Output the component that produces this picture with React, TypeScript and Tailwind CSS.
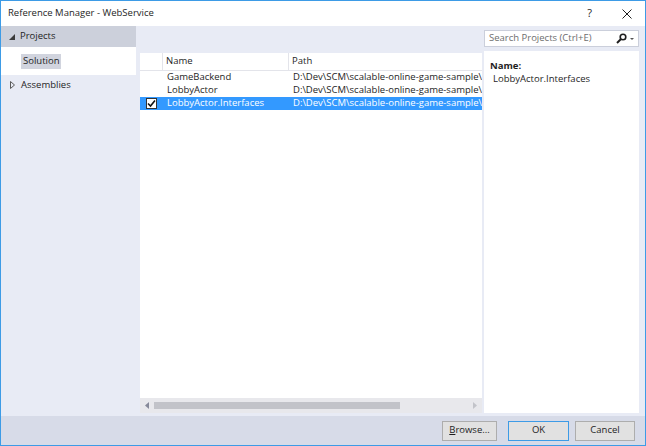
const projects = [
  { name: 'GameBackend', path: 'D:\\Dev\\SCM\\scalable-online-game-sample\\', checked: false },
  { name: 'LobbyActor', path: 'D:\\Dev\\SCM\\scalable-online-game-sample\\', checked: false },
  { name: 'LobbyActor.Interfaces', path: 'D:\\Dev\\SCM\\scalable-online-game-sample\\', checked: true },
];

function CheckBox() {
  return (
    <div className="flex h-[11px] w-[11px] items-center justify-center border border-[#333] bg-white">
      <svg width="9" height="9" viewBox="0 0 9 9">
        <path d="M1 4.5 L3.5 7 L8 1.5" fill="none" stroke="#111" strokeWidth="1.6" />
      </svg>
    </div>
  );
}

export default function App() {
  return (
    <div className="flex h-[446px] w-[646px] flex-col border border-[#3d9be6] bg-[#e8ebf5] font-['Open_Sans',sans-serif] text-[9.5px] text-[#1e1e1e]">
      {/* title bar */}
      <div className="flex h-[25px] shrink-0 items-center bg-white pl-[7px]">
        <span className="text-[9.5px]">Reference Manager - WebService</span>
        <span className="ml-auto mr-[30px] text-[11px]">?</span>
        <svg width="10" height="10" viewBox="0 0 10 10" className="mr-[13px]">
          <path d="M0.5 0.5 L9.5 9.5 M9.5 0.5 L0.5 9.5" stroke="#1e1e1e" strokeWidth="1" />
        </svg>
      </div>

      <div className="flex min-h-0 flex-1 pb-[3px]">
        {/* left tree */}
        <div className="flex w-[135px] shrink-0 flex-col">
          <div className="flex h-[21px] items-center bg-[#ccd0db] pl-[8px]">
            <svg width="6" height="6" viewBox="0 0 6 6" className="mr-[5px]">
              <path d="M6 0 L6 6 L0 6 Z" fill="#3b3b3b" />
            </svg>
            <span>Projects</span>
          </div>
          <div className="flex h-[28px] items-center bg-white pl-[20px]">
            <span className="flex h-[15px] items-center bg-[#d1d4de] px-[2px]">Solution</span>
          </div>
          <div className="flex h-[20px] items-center pl-[9px]">
            <svg width="5" height="8" viewBox="0 0 5 8" className="mr-[6px]">
              <path d="M0.5 0.5 L4.5 4 L0.5 7.5 Z" fill="none" stroke="#5a5a5a" strokeWidth="1" />
            </svg>
            <span>Assemblies</span>
          </div>
        </div>

        {/* project list */}
        <div className="ml-[4px] flex w-[342px] shrink-0 flex-col pt-[27px]">
          <div className="flex min-h-0 flex-1 flex-col bg-white">
            <div className="flex h-[18px] shrink-0 border-b border-[#e3e4ea]">
              <div className="w-[23px] border-r border-[#e3e4ea]" />
              <div className="flex w-[126px] items-center border-r border-[#e3e4ea] pl-[3px]">Name</div>
              <div className="flex flex-1 items-center pl-[3px]">Path</div>
            </div>
            {projects.map((p) => (
              <div
                key={p.name}
                className={
                  p.checked
                    ? 'flex h-[13px] items-center bg-[#3399ff] text-white'
                    : 'flex h-[13px] items-center'
                }
              >
                <div className="flex w-[23px] shrink-0 items-center pl-[6px]">{p.checked && <CheckBox />}</div>
                <div className="w-[126px] shrink-0 overflow-hidden whitespace-nowrap pl-[4px]">{p.name}</div>
                <div className="min-w-0 flex-1 overflow-hidden whitespace-nowrap pl-[4px]">{p.path}</div>
              </div>
            ))}
          </div>
          {/* horizontal scrollbar */}
          <div className="flex h-[15px] shrink-0 items-center bg-[#e8e8ec]">
            <svg width="14" height="15" viewBox="0 0 14 15">
              <path d="M5 7.5 L9 4 L9 11 Z" fill="#868999" />
            </svg>
            <div className="h-[7px] w-[246px] bg-[#c2c3c9]" />
            <div className="flex-1" />
            <svg width="14" height="15" viewBox="0 0 14 15">
              <path d="M9 7.5 L5 4 L5 11 Z" fill="#c2c3c9" />
            </svg>
          </div>
        </div>

        {/* search + details */}
        <div className="ml-[2px] flex w-[155px] shrink-0 flex-col pt-[4px]">
          <div className="flex h-[17px] shrink-0 items-center border border-[#cbcfdb] bg-white pl-[4px]">
            <span className="text-[#6d6d6d]">Search Projects (Ctrl+E)</span>
            <svg width="11" height="11" viewBox="0 0 11 11" className="ml-auto">
              <circle cx="7" cy="4" r="2.8" fill="none" stroke="#1e1e1e" strokeWidth="1.6" />
              <path d="M5 6 L1 10" stroke="#1e1e1e" strokeWidth="2" />
            </svg>
            <svg width="10" height="10" viewBox="0 0 10 10" className="mr-[1px]">
              <path d="M3 4 L7 4 L5 6 Z" fill="#555" />
            </svg>
          </div>
          <div className="mt-[4px] flex min-h-0 flex-1 flex-col bg-white pt-[8px]">
            <div className="pl-[6px] font-bold leading-[13px]">Name:</div>
            <div className="pl-[9px] leading-[13px]">LobbyActor.Interfaces</div>
          </div>
        </div>
      </div>

      {/* footer */}
      <div className="flex h-[29px] shrink-0 items-center justify-end bg-[#d7dbe8] pr-[10px]">
        <button className="h-[20px] w-[55px] border border-[#adadad] bg-[#e1e1e1]">
          <span className="underline">B</span>rowse...
        </button>
        <button className="ml-[11px] h-[20px] w-[61px] border border-[#3d9be6] bg-[#e1e1e1]">OK</button>
        <button className="ml-[6px] h-[20px] w-[60px] border border-[#adadad] bg-[#e1e1e1]">Cancel</button>
      </div>
    </div>
  );
}
